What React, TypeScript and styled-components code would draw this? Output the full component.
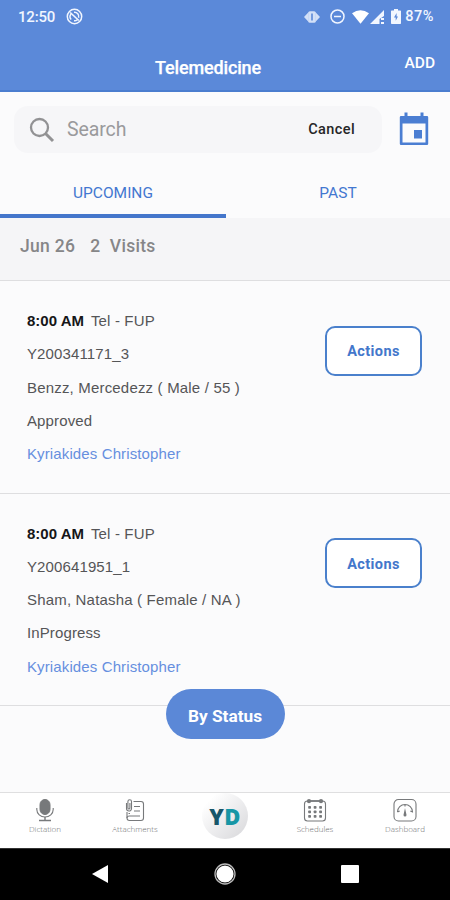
import React from "react";
import styled, { createGlobalStyle } from "styled-components";

const BLUE = "#5b89d9";
const INK_BLUE = "#4377d0";

const GlobalStyle = createGlobalStyle`
  *, *::before, *::after { box-sizing: border-box; }
  body { margin: 0; background: #fbfbfc; }
  button { font: inherit; padding: 0; border: 0; background: none; }
  svg { display: block; flex: none; }
`;

const Screen = styled.div`
  width: 450px;
  height: 900px;
  display: flex;
  flex-direction: column;
  overflow: hidden;
  background: #fbfbfc;
  font-family: Roboto, sans-serif;
`;

const Top = styled.header`
  height: 92px;
  flex: none;
  background: ${BLUE};
  border-bottom: 2px solid #4b7dcf;
  color: #fff;
`;

const StatusBar = styled.div`
  height: 33px;
  padding: 0 16px 0 18px;
  display: flex;
  align-items: center;
  justify-content: space-between;
  color: #f1f6ff;
`;

const StatusGroup = styled.div<{ $gap: number }>`
  display: flex;
  align-items: center;
  gap: ${(p) => p.$gap}px;
`;

const Clock = styled.span`
  font: 500 15px/18px Roboto, sans-serif;
  letter-spacing: -0.2px;
`;

const Charge = styled.span`
  font: 500 14.5px/18px Roboto, sans-serif;
  letter-spacing: 0.5px;
`;

const TitleBar = styled.div`
  height: 57px;
  padding: 0 15px;
  display: grid;
  grid-template-columns: 1fr auto 1fr;
`;

const Title = styled.h1`
  grid-column: 2;
  margin: 24px 34px 0 0;
  font: 500 18px/22px Roboto, sans-serif;
  letter-spacing: -0.15px;
  -webkit-text-stroke: 0.25px #fff;
`;

const AddButton = styled.button`
  justify-self: end;
  align-self: start;
  margin-top: 21px;
  color: #fff;
  && { font: 500 15.5px/18px Roboto, sans-serif; }
`;

const SearchRow = styled.div`
  height: 75px;
  flex: none;
  padding: 14px 21px 0 14px;
  display: flex;
  align-items: flex-start;
  justify-content: space-between;
`;

const SearchField = styled.div`
  width: 368px;
  height: 47px;
  padding: 0 27px 0 15px;
  display: flex;
  align-items: center;
  border-radius: 14px;
  background: #f6f6f8;
`;

const Placeholder = styled.span`
  margin-left: 12px;
  flex: 1;
  font: 400 19.5px/24px Roboto, sans-serif;
  letter-spacing: -0.1px;
  color: #9a9a9c;
`;

const Cancel = styled.button`
  color: #262628;
  && { font: 500 14.5px/18px Roboto, sans-serif; letter-spacing: 0.4px; }
`;

const CalendarButton = styled.button`
  margin-top: 6px;
`;

const Tabs = styled.div`
  height: 51px;
  flex: none;
  display: grid;
  grid-template-columns: 226px 1fr;
`;

const Tab = styled.button<{ $active?: boolean }>`
  padding-top: 4px;
  color: ${INK_BLUE};
  border-bottom: 4px solid ${(p) => (p.$active ? "#4476cb" : "transparent")};
  && { font: 400 15.5px/18px Roboto, sans-serif; letter-spacing: 0; }
`;

const SectionHead = styled.div`
  height: 63px;
  flex: none;
  padding: 17px 20px 0;
  display: flex;
  gap: 15px;
  border-bottom: 1px solid #dedee0;
  background: #f5f5f7;
  color: #868688;
  font: 500 17.5px/22px Roboto, sans-serif;
  letter-spacing: 0.3px;
  white-space: pre;
`;

const Card = styled.article`
  height: 212.5px;
  flex: none;
  padding: 23px 28px 0 27px;
  display: flex;
  justify-content: space-between;
  border-bottom: 1px solid #dedee0;
  font-family: "Liberation Sans", sans-serif;
`;

const Lines = styled.div`
  display: flex;
  flex-direction: column;
`;

const Line = styled.div<{ $link?: boolean; $track?: number }>`
  height: 33.3px;
  font-size: 15px;
  line-height: 34px;
  letter-spacing: ${(p) => p.$track ?? 0.12}px;
  white-space: pre;
  color: ${(p) => (p.$link ? "#668fdf" : "#555557")};
`;

const Time = styled.b`
  margin-right: 7px;
  letter-spacing: 0;
  color: #161618;
`;

const ActionButton = styled.button`
  width: 97px;
  height: 50px;
  margin-top: 21.5px;
  padding-top: 3px;
  border: 2px solid #4a80cc;
  border-radius: 10px;
  background: #fff;
  color: #4377cb;
  && { font: 700 14.5px/18px Roboto, sans-serif; letter-spacing: 0.4px; }
`;

const ListFoot = styled.div`
  flex: 1;
  display: flex;
  justify-content: center;
`;

const StatusButton = styled.button`
  position: relative;
  width: 119px;
  height: 50px;
  margin-top: -17px;
  padding-top: 3px;
  border-radius: 25px;
  background: #5b88d7;
  color: #fff;
  && { font: 700 17.3px/20px Roboto, sans-serif; letter-spacing: 0; }
`;

const BottomTabs = styled.nav`
  height: 56px;
  flex: none;
  display: grid;
  grid-template-columns: repeat(5, 1fr);
  border-top: 1px solid #dfdfe0;
  background: #fff;
`;

const BottomTab = styled.div`
  padding-top: 5px;
  display: flex;
  flex-direction: column;
  align-items: center;
  color: #77797b;
`;

const TabLabel = styled.span`
  margin-top: 2px;
  font: 300 8px/10px "Open Sans", sans-serif;
  letter-spacing: 0;
  color: #6c6e70;
`;

const Logo = styled.div`
  width: 46px;
  height: 46px;
  margin-top: -5px;
  display: flex;
  align-items: center;
  justify-content: center;
  border-radius: 50%;
  background: linear-gradient(135deg, #fff 15%, #d9d9dc 95%);
  font: 800 22px/46px "Open Sans", sans-serif;
  letter-spacing: 0.3px;
  color: #1696a5;
`;

const LogoDark = styled.span`
  color: #17566a;
`;

const SystemNav = styled.div`
  height: 52px;
  flex: none;
  padding: 0 37px 2px;
  display: grid;
  grid-template-columns: repeat(3, 1fr);
  place-items: center;
  border-top: 1px solid #333;
  background: #000;
`;

const visits = [
  { id: "Y200341171_3", patient: "Benzz, Mercedezz ( Male / 55 )", status: "Approved" },
  { id: "Y200641951_1", patient: "Sham, Natasha ( Female / NA )", status: "InProgress" },
];

const SyncIcon = () => (
  <svg width="17" height="17" viewBox="0 0 17 17" fill="none" stroke="currentColor">
    <circle cx="8.5" cy="8.5" r="7.2" strokeWidth="1.5" />
    <path d="M5.200 11.500A4.300 4.300 0 0 1 5 6M8 4.300a4.300 4.300 0 0 1 4.600 5.500M11.300 11.800a4.300 4.300 0 0 1-3.300 1" strokeWidth="1.5" />
    <path d="M4.200 4.500l8.600 8" strokeWidth="1.7" />
  </svg>
);

const VibrateIcon = () => (
  <svg width="16" height="14" viewBox="0 0 16 14" fill="currentColor" opacity=".8">
    <path d="M4.700 2L0 7l4.700 5zM11.300 2L16 7l-4.700 5z" />
    <rect x="4.300" y="1.200" width="7.400" height="11.600" rx="1.500" />
    <rect x="7.200" y="3.500" width="1.600" height="7" fill={BLUE} />
  </svg>
);

const DndIcon = () => (
  <svg width="15" height="15" viewBox="0 0 15 15" fill="none" stroke="currentColor" strokeWidth="1.500">
    <circle cx="7.500" cy="7.500" r="6.500" />
    <path d="M4 7.500h7" />
  </svg>
);

const WifiIcon = () => (
  <svg width="17" height="14" viewBox="0 0 17 14" fill="#fff">
    <path d="M0 3.200Q8.500-2.800 17 3.200L8.500 13.800z" />
  </svg>
);

const SignalIcon = () => (
  <svg width="14" height="14" viewBox="0 0 14 14" fill="currentColor">
    <path d="M0 14L14 0v6L9.500 9v5z" />
    <path d="M11 8h3v2h-3zM11 12h3v2h-3z" />
  </svg>
);

const BatteryIcon = () => (
  <svg width="10" height="15" viewBox="0 0 10 15" fill="currentColor">
    <path d="M3 0h4v1.500h2.300q.7 0 .7.700v12q0 .8-.7.800H.700q-.7 0-.7-.8v-12q0-.7.700-.7H3z" />
    <path d="M5.600 4L3 8.600h1.700v3.100L7 7.400H5.600z" fill={BLUE} />
  </svg>
);

const SearchIcon = () => (
  <svg width="26" height="26" viewBox="0 0 26 26" fill="none" stroke="#929294" strokeWidth="2.300">
    <circle cx="10.500" cy="10.500" r="8.500" />
    <path d="M16.500 16.500l7.500 7.500" strokeWidth="3" />
  </svg>
);

const CalendarIcon = () => (
  <svg width="30" height="34" viewBox="0 0 30 34" fill="#4b7ed2">
    <path d="M2 4h26q1.200 0 1.200 1.200v26.600q0 1.200-1.200 1.200H2q-1.200 0-1.200-1.200V5.200Q.8 4 2 4zM3.500 11.500v19h23v-19z" fillRule="evenodd" />
    <path d="M5.500 .5h3v4h-3zM21.500 .5h3v4h-3zM15 18h8v8.500h-8z" />
  </svg>
);

const MicIcon = () => (
  <svg width="20" height="24" viewBox="0 0 20 24" fill="none" stroke="currentColor">
    <rect x="5" y="1.500" width="10" height="15" rx="5" fill="currentColor" />
    <path d="M1.800 10v1.500a8.200 7.500 0 0 0 16.400 0V10" strokeWidth="1.100" />
    <path d="M10 19v3.500M4 22.500h12" strokeWidth="1.400" />
  </svg>
);

const AttachIcon = () => (
  <svg width="20" height="24" viewBox="0 0 20 24" fill="none" stroke="currentColor" strokeWidth="1.100">
    <path d="M8.500 3.500h7.500q2.500 0 2.500 2.500v14q0 2.500-2.500 2.500H4.500Q2 22.500 2 20v-6" />
    <path d="M2 20q0-2 2.500-2H15M9 8.500h6M9 13h6M5 15.500H3.500" />
    <path d="M1.500 5v5.500a2.500 2.500 0 0 0 5 0V3.500a1.800 1.800 0 0 0-3.600 0v6.500a1 1 0 0 0 2 0V5" />
  </svg>
);

const dots = [9, 13.500, 18];

const ScheduleIcon = () => (
  <svg width="24" height="24" viewBox="0 0 24 24" fill="none" stroke="currentColor" strokeWidth="1.100">
    <rect x="1.500" y="3" width="21" height="20" rx="3" />
    <path d="M7 3h10" strokeWidth="1.700" />
    {[6, 18].map((x) => (
      <circle key={x} cx={x} cy="3.200" r="2.100" fill="currentColor" stroke="none" />
    ))}
    {dots.map((y) =>
      [6.500, 12, 17.500].map((x) => (
        <rect key={`${x}-${y}`} x={x - 1.300} y={y - 1} width="2.800" height="2.800" rx=".7" fill="currentColor" stroke="none" />
      ))
    )}
  </svg>
);

const DashboardIcon = () => (
  <svg width="24" height="24" viewBox="0 0 24 24" fill="none" stroke="currentColor" strokeWidth="1.100">
    <rect x="1" y="1.500" width="22" height="21.500" rx="4.500" />
    <path d="M4.500 14a7.500 7.500 0 0 1 15 0l-2.200-1M4.500 14l2.200-1M12 6.500v2" />
    <path d="M12 10l1.500 7q0 1.500-1.500 1.500t-1.500-1.500z" fill="currentColor" stroke="none" />
  </svg>
);

export default function App() {
  return (
    <>
      <GlobalStyle />
      <Screen>
        <Top>
          <StatusBar>
            <StatusGroup $gap={11}>
              <Clock>12:50</Clock>
              <SyncIcon />
            </StatusGroup>
            <StatusGroup $gap={4}>
              <StatusGroup $gap={7}>
                <StatusGroup $gap={10}>
                  <VibrateIcon />
                  <DndIcon />
                </StatusGroup>
                <StatusGroup $gap={1}>
                  <WifiIcon />
                  <SignalIcon />
                </StatusGroup>
                <BatteryIcon />
              </StatusGroup>
              <Charge>87%</Charge>
            </StatusGroup>
          </StatusBar>
          <TitleBar>
            <Title>Telemedicine</Title>
            <AddButton>ADD</AddButton>
          </TitleBar>
        </Top>
        <SearchRow>
          <SearchField>
            <SearchIcon />
            <Placeholder>Search</Placeholder>
            <Cancel>Cancel</Cancel>
          </SearchField>
          <CalendarButton aria-label="Calendar">
            <CalendarIcon />
          </CalendarButton>
        </SearchRow>
        <Tabs>
          <Tab $active>UPCOMING</Tab>
          <Tab>PAST</Tab>
        </Tabs>
        <SectionHead>
          <span>Jun 26</span>
          <span>{"2  Visits"}</span>
        </SectionHead>
        {visits.map((v) => (
          <Card key={v.id}>
            <Lines>
              <Line $track={0.15}>
                <Time>8:00 AM</Time>Tel - FUP
              </Line>
              <Line>{v.id}</Line>
              <Line $track={0.18}>{v.patient}</Line>
              <Line>{v.status}</Line>
              <Line $link>Kyriakides Christopher</Line>
            </Lines>
            <ActionButton>Actions</ActionButton>
          </Card>
        ))}
        <ListFoot>
          <StatusButton>By Status</StatusButton>
        </ListFoot>
        <BottomTabs>
          <BottomTab>
            <MicIcon />
            <TabLabel>Dictation</TabLabel>
          </BottomTab>
          <BottomTab>
            <AttachIcon />
            <TabLabel>Attachments</TabLabel>
          </BottomTab>
          <BottomTab>
            <Logo>
              <LogoDark>Y</LogoDark>D
            </Logo>
          </BottomTab>
          <BottomTab>
            <ScheduleIcon />
            <TabLabel>Schedules</TabLabel>
          </BottomTab>
          <BottomTab>
            <DashboardIcon />
            <TabLabel>Dashboard</TabLabel>
          </BottomTab>
        </BottomTabs>
        <SystemNav>
          <svg width="16" height="18" viewBox="0 0 16 18" fill="#fff">
            <path d="M16 0v18L0 9z" />
          </svg>
          <svg width="22" height="22" viewBox="0 0 22 22">
            <circle cx="11" cy="11" r="10" fill="none" stroke="#bbb" strokeWidth="1.300" />
            <circle cx="11" cy="11" r="8.600" fill="#fff" />
          </svg>
          <svg width="18" height="18" viewBox="0 0 18 18" fill="#fff">
            <rect width="18" height="18" rx="1" />
          </svg>
        </SystemNav>
      </Screen>
    </>
  );
}
